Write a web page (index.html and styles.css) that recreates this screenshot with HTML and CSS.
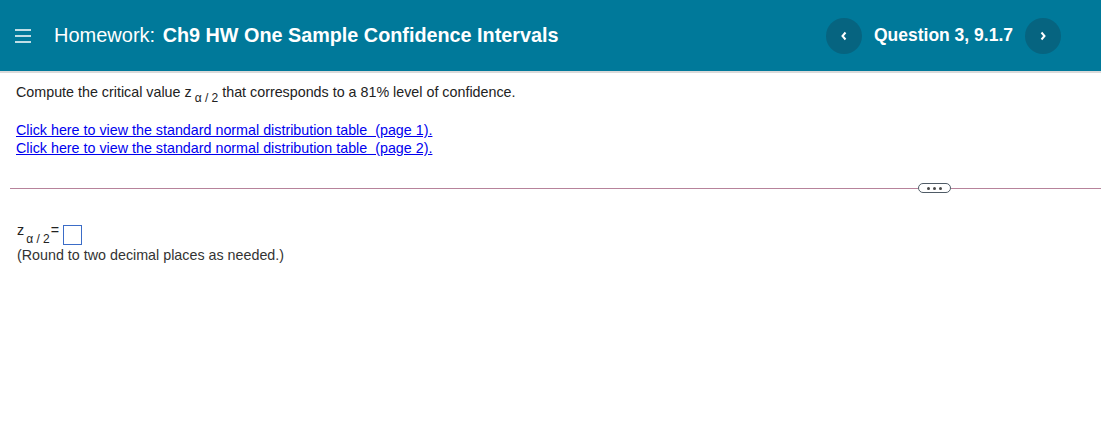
FILE: index.html
```html
<!DOCTYPE html>
<html lang="en">
<head>
  <meta charset="UTF-8">
  <title>Homework: Ch9 HW One Sample Confidence Intervals</title>
  <link rel="stylesheet" href="styles.css">
</head>
<body>
  <header class="topbar">
    <button class="menu-btn" aria-label="Menu">
      <svg width="16" height="14" viewBox="0 0 16 14">
        <path d="M0 1h16M0 7h16M0 13h16" stroke="#fff" stroke-width="1.6"/>
      </svg>
    </button>
    <h1 class="title">
      <span class="title-label">Homework:</span>
      <span class="title-name">Ch9 HW One Sample Confidence Intervals</span>
    </h1>
    <nav class="qnav">
      <button class="circle-btn" aria-label="Previous question">
        <svg width="8" height="10" viewBox="0 0 8 10">
          <polyline points="5.5,1.5 2.5,5 5.5,8.5" fill="none" stroke="#fff" stroke-width="2"/>
        </svg>
      </button>
      <span class="qnum">Question 3, 9.1.7</span>
      <button class="circle-btn" aria-label="Next question">
        <svg width="8" height="10" viewBox="0 0 8 10">
          <polyline points="2.5,1.5 5.5,5 2.5,8.5" fill="none" stroke="#fff" stroke-width="2"/>
        </svg>
      </button>
    </nav>
  </header>

  <main class="question">
    <p class="prompt">Compute the critical value z<span class="sub">&alpha; / 2</span> that corresponds to a 81% level of confidence.</p>

    <div class="links">
      <a href="#">Click here to view the standard normal distribution table &nbsp;(page 1).</a><br>
      <a href="#">Click here to view the standard normal distribution table &nbsp;(page 2).</a>
    </div>

    <div class="divider">
      <span class="more-pill"><i></i><i></i><i></i></span>
    </div>

    <div class="answer">z<span class="sub">&alpha; / 2</span><span class="eq">=</span><span class="answer-box"></span></div>
    <p class="hint">(Round to two decimal places as needed.)</p>
  </main>
</body>
</html>
```

FILE: styles.css
```css
body {
  margin: 0;
  font-family: 'Liberation Sans', Arial, sans-serif;
  background: #fff;
  color: #222;
}

/* top bar */
.topbar {
  display: flex;
  align-items: center;
  height: 71px;
  padding: 0 40px 0 15px;
  background: #00799a;
  border-bottom: 2px solid #dadada;
  color: #fff;
}
.menu-btn {
  display: flex;
  padding: 0;
  border: none;
  background: none;
  cursor: pointer;
}
.title {
  margin: 0 0 0 23px;
  font-size: 20px;
  font-weight: normal;
  white-space: nowrap;
}
.title-name {
  margin-left: 2px;
  font-size: 19.8px;
  font-weight: bold;
}
.qnav {
  display: flex;
  align-items: center;
  gap: 12px;
  margin-left: auto;
}
.qnum {
  font-size: 17.5px;
  font-weight: bold;
}
.circle-btn {
  display: flex;
  align-items: center;
  justify-content: center;
  width: 36px;
  height: 36px;
  padding: 0;
  border: none;
  border-radius: 50%;
  background: #066480;
  cursor: pointer;
}

/* question body */
.question {
  padding-top: 11px;
  font-size: 14.3px;
  line-height: 16px;
}
.prompt {
  margin: 0 16px;
}
.sub {
  padding-left: 3px;
  font-size: 12px;
  line-height: 0;
  vertical-align: -5px;
}
.links {
  margin: 21px 16px 0;
  line-height: 18px;
}
.links a {
  color: #0000ee;
}

.divider {
  display: flex;
  align-items: center;
  margin: 26px 0 0 10px;
}
.divider::before,
.divider::after {
  content: "";
  height: 1px;
  background: #b7839b;
}
.divider::before {
  flex: 1;
}
.divider::after {
  width: 150px;
}
.more-pill {
  display: flex;
  align-items: center;
  justify-content: center;
  gap: 3px;
  box-sizing: border-box;
  width: 33px;
  height: 10px;
  border: 1px solid #4f5b66;
  border-radius: 5px;
}
.more-pill i {
  width: 3px;
  height: 3px;
  border-radius: 50%;
  background: #4a4a4a;
}

.answer {
  margin: 29px 16px 0 17px;
}
.answer .sub {
  padding-left: 2px;
  vertical-align: -8px;
}
.eq {
  margin-left: 1px;
}
.answer-box {
  display: inline-block;
  box-sizing: border-box;
  width: 19px;
  height: 20px;
  margin-left: 4px;
  border: 1px solid #3b6cc7;
  vertical-align: -10px;
}
.hint {
  margin: 2px 16px 0 17px;
  color: #333;
}
```
